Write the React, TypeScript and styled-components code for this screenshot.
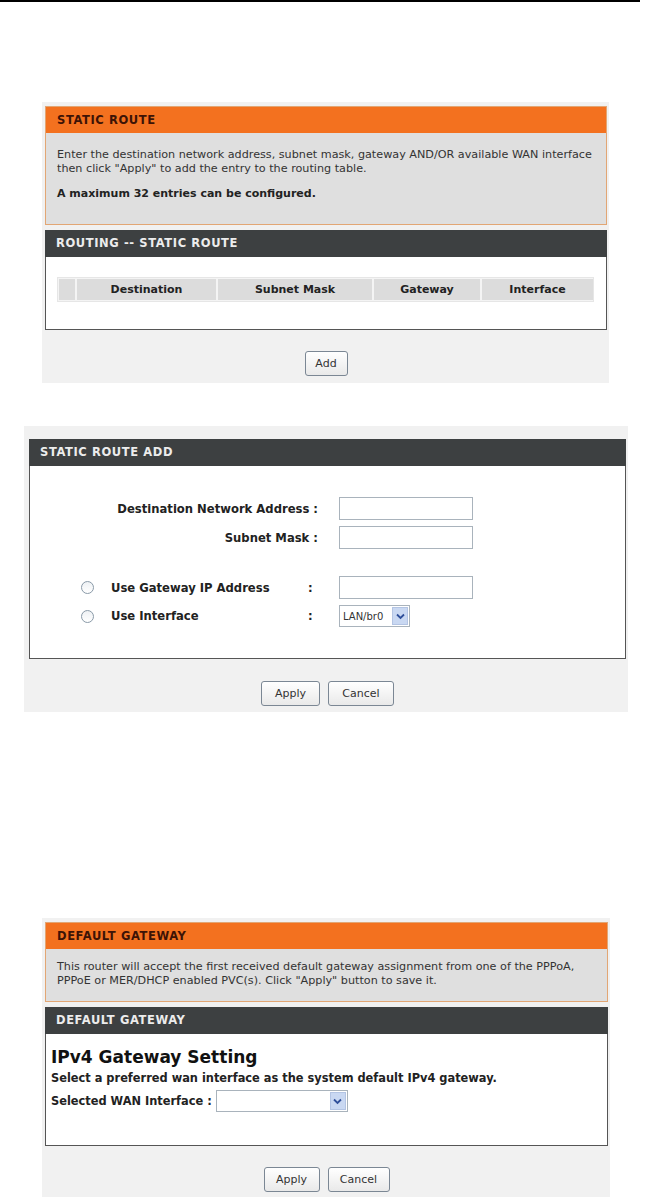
import React from 'react';
import styled, {createGlobalStyle} from 'styled-components';

const Global = createGlobalStyle`
  body {
    margin: 0;
    background: #fff;
    font-family: "DejaVu Sans", Verdana, sans-serif;
  }
`

const TopRule = styled.div`
  height: 2px;
  width: 640px;
  background: #000;
`

const Section = styled.section<{$left: number; $top: number; $width: number; $padTop: number; $padLeft: number}>`
  box-sizing: border-box;
  margin: ${p => p.$top}px 0 0 ${p => p.$left}px;
  width: ${p => p.$width}px;
  background: #f1f1f1;
  padding: ${p => p.$padTop}px 2px 0 ${p => p.$padLeft}px;
`

const InfoBox = styled.div`
  border: 1px solid #e2a674;
  background: #dfdfdf;
  margin-bottom: 5px;
`

const OrangeBar = styled.div`
  height: 26px;
  line-height: 27px;
  background: #f3711f;
  color: #3d1306;
  font-size: 11.5px;
  font-weight: bold;
  letter-spacing: 0.6px;
  padding-left: 11px;
`

const Desc = styled.div<{$pad: string}>`
  padding: ${p => p.$pad};
  font-size: 11.2px;
  line-height: 14px;
  color: #333;
`

const DescStrong = styled.div`
  margin-top: 11px;
  font-weight: bold;
  font-size: 11px;
  color: #222;
`

const DarkBar = styled.div`
  height: 27px;
  line-height: 27px;
  background: #3d4041;
  color: #ececec;
  font-size: 11.5px;
  font-weight: bold;
  letter-spacing: 0.6px;
  padding-left: 11px;
`

const Body = styled.div<{$pad: string}>`
  background: #fff;
  border: 1px solid #555;
  border-top: none;
  padding: ${p => p.$pad};
`

const RouteTable = styled.div`
  display: grid;
  grid-template-columns: 16px 139px 154px 106px 111px;
  gap: 2px;
  padding: 1px;
  background: #f4f4f4;
  border: 1px solid #e6e6e6;
`

const HeadCell = styled.div`
  height: 21px;
  line-height: 21px;
  background: #dcdcdc;
  text-align: center;
  font-size: 11px;
  font-weight: bold;
  color: #222;
`

const ButtonBar = styled.div<{$padTop: number; $height: number}>`
  display: flex;
  justify-content: center;
  align-items: flex-start;
  gap: 8px;
  box-sizing: border-box;
  height: ${p => p.$height}px;
  padding-top: ${p => p.$padTop}px;
`

const Button = styled.button<{$w: number}>`
  width: ${p => p.$w}px;
  height: 25px;
  border: 1px solid #7b8794;
  border-radius: 3px;
  background: linear-gradient(#ffffff, #e9e9e9);
  font-family: "DejaVu Sans", Verdana, sans-serif;
  font-size: 11px;
  color: #333;
  padding: 0;
`

const FormGrid = styled.div`
  display: grid;
  grid-template-columns: 30px 197px 10px 134px;
  column-gap: 0;
  align-items: center;
  row-gap: 6px;
`

const FieldLabel = styled.div<{$span?: boolean; $gapTop?: number}>`
  grid-column: ${p => (p.$span ? '1 / 4' : 'auto')};
  text-align: ${p => (p.$span ? 'right' : 'left')};
  font-size: 11.6px;
  font-weight: bold;
  color: #222;
  margin-top: ${p => p.$gapTop || 0}px;
`

const Colon = styled.div<{$gapTop?: number}>`
  font-size: 11.6px;
  font-weight: bold;
  color: #222;
  margin-top: ${p => p.$gapTop || 0}px;
`

const Radio = styled.span<{$gapTop?: number}>`
  display: block;
  width: 11px;
  height: 11px;
  border: 1px solid #8a9aa8;
  border-radius: 50%;
  background: linear-gradient(#eef1f4, #fff);
  margin-top: ${p => p.$gapTop || 0}px;
`

const TextBox = styled.div<{$gapTop?: number}>`
  box-sizing: border-box;
  width: 134px;
  height: 23px;
  margin-left: 21px;
  border: 1px solid #a9b3bc;
  background: #fff;
  margin-top: ${p => p.$gapTop || 0}px;
`

const Select = styled.div<{$w: number; $ml?: number}>`
  box-sizing: border-box;
  display: flex;
  align-items: center;
  justify-content: space-between;
  width: ${p => p.$w}px;
  height: 22px;
  margin-left: ${p => p.$ml ?? 0}px;
  border: 1px solid #a9b3bc;
  background: #fff;
  font-size: 10px;
  color: #333;
  padding-left: 3px;
`

const DropArrow = styled.span`
  display: flex;
  align-items: center;
  justify-content: center;
  width: 16px;
  height: 18px;
  margin-right: 1px;
  background: #c9d8f2;
  border: 1px solid #b3c4e3;
  box-sizing: border-box;
`

const GwHeading = styled.div`
  font-size: 17px;
  font-weight: bold;
  color: #111;
  line-height: 22px;
`

const GwText = styled.div`
  font-size: 11.4px;
  font-weight: bold;
  color: #222;
  line-height: 20px;
`

const GwRow = styled.div`
  display: flex;
  align-items: center;
  gap: 4px;
  margin-top: 2px;
`

const Chevron = () => (
  <svg width="9" height="7" viewBox="0 0 9 7">
    <path d="M1 1.5 L4.5 5 L8 1.5" fill="none" stroke="#2f4f9a" strokeWidth="1.8" />
  </svg>
)

export default function App() {
  return (
    <>
      <Global />
      <TopRule />

      <Section $left={42} $top={100} $width={567} $padTop={4} $padLeft={3}>
        <InfoBox>
          <OrangeBar>STATIC ROUTE</OrangeBar>
          <Desc $pad="15px 11px 23px">
            Enter the destination network address, subnet mask, gateway AND/OR available WAN interface
            <br />
            then click "Apply" to add the entry to the routing table.
            <DescStrong>A maximum 32 entries can be configured.</DescStrong>
          </Desc>
        </InfoBox>
        <DarkBar>ROUTING -- STATIC ROUTE</DarkBar>
        <Body $pad="20px 12px 27px 11px">
          <RouteTable>
            <HeadCell />
            <HeadCell>Destination</HeadCell>
            <HeadCell>Subnet Mask</HeadCell>
            <HeadCell>Gateway</HeadCell>
            <HeadCell>Interface</HeadCell>
          </RouteTable>
        </Body>
        <ButtonBar $padTop={21} $height={53}>
          <Button $w={43}>Add</Button>
        </ButtonBar>
      </Section>

      <Section $left={24} $top={43} $width={604} $padTop={13} $padLeft={5}>
        <DarkBar>STATIC ROUTE ADD</DarkBar>
        <Body $pad="31px 0 31px 51px">
          <FormGrid>
            <FieldLabel $span>Destination Network Address :</FieldLabel>
            <TextBox />
            <FieldLabel $span>Subnet Mask :</FieldLabel>
            <TextBox />

            <Radio $gapTop={21} />
            <FieldLabel $gapTop={21}>Use Gateway IP Address</FieldLabel>
            <Colon $gapTop={21}>:</Colon>
            <TextBox $gapTop={21} />

            <Radio />
            <FieldLabel>Use Interface</FieldLabel>
            <Colon>:</Colon>
            <Select $w={71} $ml={21}>
              LAN/br0
              <DropArrow>
                <Chevron />
              </DropArrow>
            </Select>
          </FormGrid>
        </Body>
        <ButtonBar $padTop={22} $height={53}>
          <Button $w={59}>Apply</Button>
          <Button $w={66}>Cancel</Button>
        </ButtonBar>
      </Section>

      <Section $left={42} $top={206} $width={568} $padTop={4} $padLeft={3}>
        <InfoBox>
          <OrangeBar>DEFAULT GATEWAY</OrangeBar>
          <Desc $pad="11px 11px 13px">
            This router will accept the first received default gateway assignment from one of the PPPoA,
            <br />
            PPPoE or MER/DHCP enabled PVC(s). Click "Apply" button to save it.
          </Desc>
        </InfoBox>
        <DarkBar>DEFAULT GATEWAY</DarkBar>
        <Body $pad="12px 10px 33px 5px">
          <GwHeading>IPv4 Gateway Setting</GwHeading>
          <GwText>Select a preferred wan interface as the system default IPv4 gateway.</GwText>
          <GwRow>
            <GwText>Selected WAN Interface :</GwText>
            <Select $w={132}>
              <span />
              <DropArrow>
                <Chevron />
              </DropArrow>
            </Select>
          </GwRow>
        </Body>
        <ButtonBar $padTop={21} $height={52}>
          <Button $w={56}>Apply</Button>
          <Button $w={62}>Cancel</Button>
        </ButtonBar>
      </Section>
    </>
  )
}
